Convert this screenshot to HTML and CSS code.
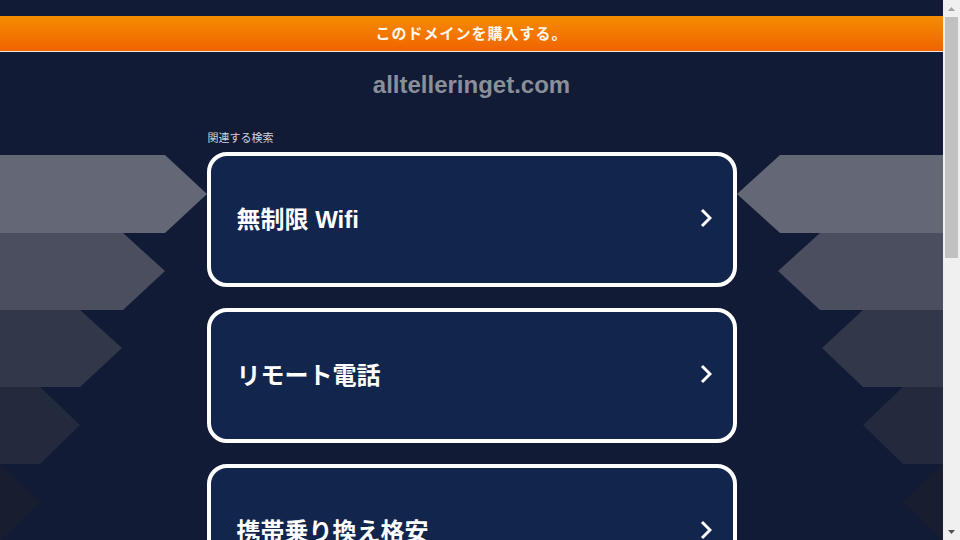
FILE: index.html
```html
<!DOCTYPE html>
<html lang="ja">
<head>
    <meta charset="UTF-8">
    <meta name="viewport" content="width=device-width, initial-scale=1.0">
    <title>alltelleringet.com</title>
    <link rel="stylesheet" href="styles.css">
</head>
<body>
    <div class="window">
        <div class="main">
            <!-- Background arrows -->
            <svg class="backdrop" viewBox="0 0 943 540" preserveAspectRatio="none">
                <polygon points="0,155 165,155 207,194 165,233 0,233" fill="#636776"/>
                <polygon points="0,233 123,233 165,271 123,310 0,310" fill="#4a4e5e"/>
                <polygon points="0,310 80,310 122,348 80,387 0,387" fill="#33374a"/>
                <polygon points="0,387 40,387 80,425 40,464 0,464" fill="#232a3d"/>
                <polygon points="0,464 40,502 0,541" fill="#181d30"/>
                <polygon points="943,155 780,155 737,194 780,233 943,233" fill="#636776"/>
                <polygon points="943,233 820,233 778,271 820,310 943,310" fill="#4a4e5e"/>
                <polygon points="943,310 863,310 822,348 863,387 943,387" fill="#33374a"/>
                <polygon points="943,387 903,387 863,425 903,464 943,464" fill="#232a3d"/>
                <polygon points="943,464 903,502 943,541" fill="#181d30"/>
            </svg>

            <div class="page">
                <div class="buy-bar">このドメインを購入する。</div>

                <h1 class="domain">alltelleringet.com</h1>

                <div class="searches">
                    <p class="searches-title">関連する検索</p>

                    <a class="search-card" href="#">
                        <span>無制限 Wifi</span>
                        <svg class="chevron" viewBox="0 0 12 20"><polyline points="2,2 10,10 2,18"/></svg>
                    </a>
                    <a class="search-card" href="#">
                        <span>リモート電話</span>
                        <svg class="chevron" viewBox="0 0 12 20"><polyline points="2,2 10,10 2,18"/></svg>
                    </a>
                    <a class="search-card" href="#">
                        <span>携帯乗り換え格安</span>
                        <svg class="chevron" viewBox="0 0 12 20"><polyline points="2,2 10,10 2,18"/></svg>
                    </a>
                </div>
            </div>
        </div>

        <!-- Scrollbar -->
        <div class="scrollbar">
            <div class="scroll-arrow">
                <svg viewBox="0 0 7 4"><polygon points="0,4 3.5,0 7,4" fill="#a3a3a3"/></svg>
            </div>
            <div class="scroll-track">
                <div class="scroll-thumb"></div>
            </div>
            <div class="scroll-arrow">
                <svg viewBox="0 0 7 4"><polygon points="0,0 7,0 3.5,4" fill="#505050"/></svg>
            </div>
        </div>
    </div>
</body>
</html>
```

FILE: styles.css
```css
body {
    margin: 0;
    font-family: Arial, "Liberation Sans", "Noto Sans CJK JP", sans-serif;
    background: #111b36;
    color: #fff;
    overflow: hidden;
}

.window {
    display: flex;
    height: 540px;
}

.main {
    flex: 1;
    position: relative;
    overflow: hidden;
}

.backdrop {
    position: absolute;
    top: 0;
    left: 0;
    width: 100%;
    height: 540px;
    z-index: 0;
}

.page {
    position: relative;
    z-index: 1;
    padding-top: 16px;
}

.buy-bar {
    height: 35px;
    line-height: 35px;
    background: linear-gradient(#f58c02, #f06400);
    border-bottom: 1px solid #f3e6dc;
    text-align: center;
    font-size: 15px;
    font-weight: bold;
    color: #fff8ee;
    letter-spacing: 1px;
}

.domain {
    margin: 19px 0 0;
    text-align: center;
    font-size: 24px;
    font-weight: bold;
    color: #8b8f99;
    line-height: 28px;
}

.searches {
    width: 530px;
    margin: 0 auto;
    padding-top: 32px;
}

.searches-title {
    margin: 0 0 7px 1px;
    font-size: 11px;
    color: #d0d3da;
    line-height: 14px;
}

.search-card {
    display: flex;
    align-items: center;
    justify-content: space-between;
    height: 123px;
    margin-bottom: 21px;
    padding: 0 21px 4px 26px;
    background: #12264d;
    border: 4px solid #fff;
    border-radius: 20px;
    color: #fff;
    text-decoration: none;
    font-size: 24px;
    font-weight: bold;
}

.chevron {
    width: 12px;
    height: 20px;
    fill: none;
    stroke: #fff;
    stroke-width: 3;
}

.scrollbar {
    width: 17px;
    display: flex;
    flex-direction: column;
    background: #f0f0f0;
}

.scroll-arrow {
    height: 17px;
    display: flex;
    align-items: center;
    justify-content: center;
}

.scroll-arrow svg {
    width: 7px;
    height: 4px;
}

.scroll-track {
    flex: 1;
    padding: 0 2px;
}

.scroll-thumb {
    height: 241px;
    background: #c1c1c1;
}
```
